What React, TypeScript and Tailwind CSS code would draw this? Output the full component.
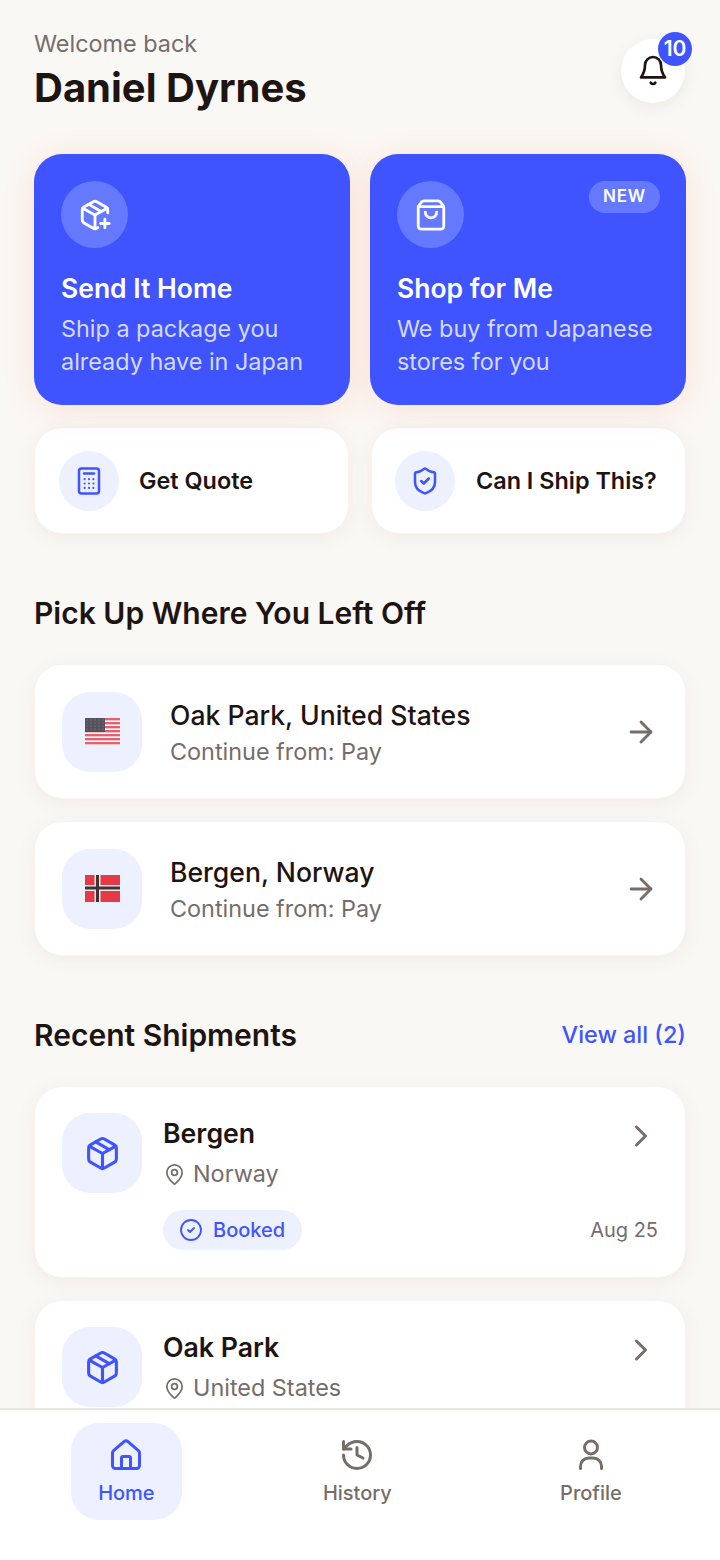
import { ArrowRight, ChevronRight, History, MapPin, ShieldCheck, CircleCheck, ShoppingBag } from 'lucide-react';

const PackageIcon = ({ className }: { className?: string }) => (
  <svg viewBox="0 0 24 24" fill="none" stroke="currentColor" strokeWidth="2" strokeLinecap="round" strokeLinejoin="round" className={className}>
    <path d="M10.8 2.6a2.4 2.4 0 0 1 2.4 0l6.6 3.8a2.4 2.4 0 0 1 1.2 2.1v7a2.4 2.4 0 0 1-1.2 2.1l-6.6 3.8a2.4 2.4 0 0 1-2.4 0l-6.6-3.8A2.4 2.4 0 0 1 3 15.5v-7a2.4 2.4 0 0 1 1.2-2.1z" />
    <path d="M3.4 7.2 12 12l8.6-4.8" />
    <path d="M12 12v9.8" />
    <path d="m7.6 4.5 8.8 5" />
  </svg>
);

const PackagePlusIcon = ({ className }: { className?: string }) => (
  <svg viewBox="0 0 24 24" fill="none" stroke="currentColor" strokeWidth="2" strokeLinecap="round" strokeLinejoin="round" className={className}>
    <path d="M21 10.5v-2a2.4 2.4 0 0 0-1.2-2.1l-6.6-3.8a2.4 2.4 0 0 0-2.4 0L4.2 6.4A2.4 2.4 0 0 0 3 8.5v7a2.4 2.4 0 0 0 1.2 2.1l6.6 3.8a2.4 2.4 0 0 0 2.4 0l.8-.5" />
    <path d="M3.4 7.2 12 12l8.6-4.8" />
    <path d="M12 12v9.8" />
    <path d="m7.6 4.5 8.8 5" />
    <path d="M19 15v6" />
    <path d="M16 18h6" />
  </svg>
);

const BellIcon = ({ className }: { className?: string }) => (
  <svg viewBox="0 0 24 24" fill="none" stroke="currentColor" strokeWidth="2" strokeLinecap="round" strokeLinejoin="round" className={className}>
    <path d="M12 1.5a6 6 0 0 0-6 6c0 4.5-1 6.5-3 9.3h18c-2-2.8-3-4.8-3-9.3a6 6 0 0 0-6-6z" />
    <path d="M10.3 20.8a2 2 0 0 0 3.4 0" />
  </svg>
);

const CalculatorIcon = ({ className }: { className?: string }) => (
  <svg viewBox="0 0 24 24" fill="none" stroke="currentColor" strokeWidth="2" strokeLinecap="round" strokeLinejoin="round" className={className}>
    <rect x="4" y="2" width="16" height="20" rx="2" />
    <path d="M8 6h8" />
    <g strokeWidth="1.7">
      <path d="M8.5 10.5h.01M12 10.5h.01M15.5 10.5h.01" />
      <path d="M8.5 14h.01M12 14h.01M15.5 14h.01" />
      <path d="M8.5 17.5h.01M12 17.5h.01M15.5 17.5h.01" />
    </g>
  </svg>
);

const HomeIcon = ({ className }: { className?: string }) => (
  <svg viewBox="0 0 24 24" fill="none" stroke="currentColor" strokeWidth="2" strokeLinecap="round" strokeLinejoin="round" className={className}>
    <path d="M3 10.6a2 2 0 0 1 .7-1.5l7-6a2 2 0 0 1 2.6 0l7 6a2 2 0 0 1 .7 1.5V19a2 2 0 0 1-2 2H5a2 2 0 0 1-2-2z" />
    <path d="M9 21v-7a1 1 0 0 1 1-1h4a1 1 0 0 1 1 1v7" />
  </svg>
);

const ProfileIcon = ({ className }: { className?: string }) => (
  <svg viewBox="0 0 24 24" fill="none" stroke="currentColor" strokeWidth="2" strokeLinecap="round" strokeLinejoin="round" className={className}>
    <circle cx="12" cy="7" r="4.3" />
    <path d="M5 21v-1.5a5.5 5.5 0 0 1 5.5-5.5h3a5.5 5.5 0 0 1 5.5 5.5V21" />
  </svg>
);

const UsFlag = () => (
  <svg viewBox="0 0 35 27" className="h-[27px] w-[35px]">
    <rect width="35" height="27" fill="#ffffff" />
    {[0, 4, 8, 12, 16, 20, 24].map((y) => (
      <rect key={y} y={y} width="35" height="2.4" fill="#e2616e" />
    ))}
    <rect width="20" height="14" fill="#55515a" />
    {[2, 5, 8, 11].map((y) =>
      [2, 6, 10, 14, 18].map((x) => <circle key={`${x}-${y}`} cx={x} cy={y} r="0.6" fill="#8f8b92" />)
    )}
  </svg>
);

const NoFlag = () => (
  <svg viewBox="0 0 35 27" className="h-[27px] w-[35px]">
    <rect width="35" height="27" fill="#e63946" />
    <rect x="9.5" width="6" height="27" fill="#f2e8e8" />
    <rect y="10" width="35" height="6" fill="#f2e8e8" />
    <rect x="11" width="3" height="27" fill="#3a3436" />
    <rect y="11.5" width="35" height="3" fill="#3a3436" />
  </svg>
);

function ActionCard({ icon, title, lines, badge }: { icon: React.ReactNode; title: string; lines: string[]; badge?: string }) {
  return (
    <div className="relative h-[251px] rounded-[28px] bg-[#3f54ff] px-[27px] pt-[27px] text-white shadow-[0_4px_36px_rgba(255,110,60,0.16)]">
      <div className="flex h-[67px] w-[67px] items-center justify-center rounded-full bg-[#6579ff]">{icon}</div>
      {badge && (
        <span className="absolute right-[26px] top-[27px] flex h-[32px] items-center rounded-full bg-[#6579ff] px-[14px] text-[17px] font-semibold tracking-[0.05em]">
          {badge}
        </span>
      )}
      <h2 className="mt-[22px] text-[26.5px] leading-[36px] font-semibold">{title}</h2>
      <p className="mt-[6px] text-[23.4px] leading-[33px] whitespace-nowrap text-[#d5daff]">
        {lines[0]}
        <br />
        {lines[1]}
      </p>
    </div>
  );
}

function ToolCard({ icon, title, pad }: { icon: React.ReactNode; title: string; pad: string }) {
  return (
    <div className={`flex h-[107px] items-center rounded-[28px] border border-[#f6f3f0] bg-white shadow-[0_4px_20px_rgba(60,40,20,0.06)] ${pad}`}>
      <div className="flex h-[60px] w-[60px] items-center justify-center rounded-full bg-[#ecf0ff] text-[#3f54ff]">{icon}</div>
      <span className="text-[23.4px] font-semibold text-[#1e1412]">{title}</span>
    </div>
  );
}

function ContinueCard({ flag, title }: { flag: React.ReactNode; title: string }) {
  return (
    <div className="flex h-[135px] items-center rounded-[28px] border border-[#f6f3f0] bg-white px-[27px] shadow-[0_4px_20px_rgba(60,40,20,0.06)]">
      <div className="flex h-[80px] w-[80px] items-center justify-center rounded-[28px] bg-[#ecf0ff]">{flag}</div>
      <div className="ml-[28px] flex-1 pt-[4px]">
        <div className="mb-[1px] text-[26.6px] leading-[36px] font-medium text-[#1e1412]">{title}</div>
        <div className="text-[23.4px] leading-[36px] text-[#756d6a]">Continue from: Pay</div>
      </div>
      <ArrowRight className="h-[34px] w-[34px] text-[#756d6a]" strokeWidth={2} />
    </div>
  );
}

function ShipmentCard({ city, country }: { city: string; country: string }) {
  return (
    <div className="h-[192px] shrink-0 rounded-[28px] border border-[#f6f3f0] bg-white px-[27px] pt-[26px] shadow-[0_4px_20px_rgba(60,40,20,0.06)]">
      <div className="flex">
        <div className="flex h-[80px] w-[80px] items-center justify-center rounded-[28px] bg-[#ecf0ff] text-[#3f54ff]">
          <PackageIcon className="h-[37px] w-[37px]" />
        </div>
        <div className="ml-[21px] flex-1">
          <div className="text-[26.7px] leading-[40px] font-semibold text-[#1e1412]">{city}</div>
          <div className="mt-[1px] flex items-center gap-[7px] text-[23.4px] leading-[40px] text-[#756d6a]">
            <MapPin className="h-[23px] w-[23px]" strokeWidth={1.8} />
            {country}
          </div>
        </div>
        <ChevronRight className="mt-[5px] -mr-[1px] h-[36px] w-[36px] text-[#756d6a]" strokeWidth={2} />
      </div>
      <div className="ml-[101px] mt-[16px] flex items-center justify-between">
        <span className="flex h-[40px] items-center gap-[10px] rounded-full bg-[#ecf0ff] pl-[16px] pr-[17px] text-[20px] font-medium text-[#3f54ff]">
          <CircleCheck className="h-[24px] w-[24px]" strokeWidth={1.8} />
          Booked
        </span>
        <span className="text-[20px] text-[#756d6a]">Aug 25</span>
      </div>
    </div>
  );
}

function NavItem({ icon, label, active }: { icon: React.ReactNode; label: string; active?: boolean }) {
  return (
    <div className={`flex h-[97px] flex-col items-center justify-center rounded-[28px] px-[27px] ${active ? 'bg-[#ecf0ff] text-[#3f54ff]' : 'text-[#756d6a]'}`}>
      {icon}
      <span className="mt-[6px] text-[20px] leading-[28px] font-medium">{label}</span>
    </div>
  );
}

export default function App() {
  return (
    <div className="flex h-[1560px] w-[720px] flex-col overflow-hidden bg-[#faf8f5] font-['Inter',sans-serif]">
      <div className="h-[1408px] shrink-0 overflow-hidden px-[34px] pt-[29px]">
        <header className="relative h-[125px]">
          <div className="text-[23.4px] leading-[30px] text-[#756d6a]">Welcome back</div>
          <h1 className="mt-[1px] text-[40px] leading-[56px] font-bold text-[#1e1412]">Daniel Dyrnes</h1>
          <div className="absolute right-[1px] top-[10px] flex h-[64px] w-[64px] items-center justify-center rounded-full bg-white shadow-[0_4px_16px_rgba(60,40,20,0.08)]">
            <BellIcon className="h-[32px] w-[32px] text-[#1e1412]" />
            <span className="absolute -right-[7px] -top-[7px] flex h-[34px] w-[34px] items-center justify-center rounded-full bg-[#3f54ff] text-[21px] font-semibold text-white">
              10
            </span>
          </div>
        </header>

        <div className="grid grid-cols-2 gap-x-[20px]">
          <ActionCard
            icon={<PackagePlusIcon className="h-[34px] w-[34px]" />}
            title="Send It Home"
            lines={['Ship a package you', 'already have in Japan']}
          />
          <ActionCard
            icon={<ShoppingBag className="h-[34px] w-[34px]" strokeWidth={2} />}
            title="Shop for Me"
            lines={['We buy from Japanese', 'stores for you']}
            badge="NEW"
          />
        </div>

        <div className="mt-[22px] grid grid-cols-2 gap-x-[22px]">
          <ToolCard icon={<CalculatorIcon className="h-[30px] w-[30px]" />} title="Get Quote" pad="gap-[20px] pl-[24px]" />
          <ToolCard icon={<ShieldCheck className="h-[30px] w-[30px]" strokeWidth={2} />} title="Can I Ship This?" pad="gap-[21px] pl-[23px]" />
        </div>

        <h3 className="mt-[59px] text-[30px] leading-[40px] font-semibold text-[#1e1412]">Pick Up Where You Left Off</h3>

        <div className="mt-[31px] flex flex-col gap-[22px]">
          <ContinueCard flag={<UsFlag />} title="Oak Park, United States" />
          <ContinueCard flag={<NoFlag />} title="Bergen, Norway" />
        </div>

        <div className="mt-[59px] flex items-center justify-between">
          <h3 className="text-[30px] leading-[40px] font-semibold text-[#1e1412]">Recent Shipments</h3>
          <span className="text-[23.4px] font-medium text-[#3f54ff]">View all (2)</span>
        </div>

        <div className="mt-[31px] flex flex-col gap-[22px]">
          <ShipmentCard city="Bergen" country="Norway" />
          <ShipmentCard city="Oak Park" country="United States" />
        </div>
      </div>

      <nav className="flex h-[152px] shrink-0 items-start justify-around border-t-2 border-[#ebe6e2] bg-white px-[14px] pt-[13px]">
        <NavItem active icon={<HomeIcon className="h-[36px] w-[36px]" />} label="Home" />
        <NavItem icon={<History className="h-[36px] w-[36px]" strokeWidth={2} />} label="History" />
        <NavItem icon={<ProfileIcon className="h-[36px] w-[36px]" />} label="Profile" />
      </nav>
    </div>
  );
}
